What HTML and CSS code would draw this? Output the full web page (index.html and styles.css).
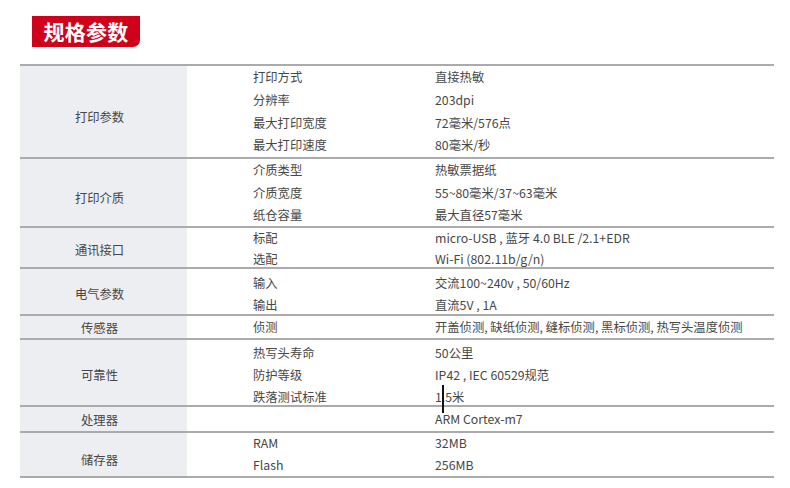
FILE: index.html
```html
<!DOCTYPE html>
<html lang="zh-CN">
<head>
<meta charset="utf-8">
<title>规格参数</title>
<link rel="stylesheet" href="styles.css">
</head>
<body>
<div class="page">
  <div class="title">规格参数</div>
  <div class="spec">
    <div class="group">
      <div class="cat cat-low">打印参数</div>
      <div class="rows lh-g1">
        <div class="row"><span class="k">打印方式</span><span class="v">直接热敏</span></div>
        <div class="row"><span class="k">分辨率</span><span class="v">203dpi</span></div>
        <div class="row"><span class="k">最大打印宽度</span><span class="v">72毫米/576点</span></div>
        <div class="row"><span class="k">最大打印速度</span><span class="v">80毫米/秒</span></div>
      </div>
    </div>
    <div class="group">
      <div class="cat cat-low">打印介质</div>
      <div class="rows lh-g2">
        <div class="row"><span class="k">介质类型</span><span class="v">热敏票据纸</span></div>
        <div class="row"><span class="k">介质宽度</span><span class="v">55~80毫米/37~63毫米</span></div>
        <div class="row"><span class="k">纸仓容量</span><span class="v">最大直径57毫米</span></div>
      </div>
    </div>
    <div class="group">
      <div class="cat">通讯接口</div>
      <div class="rows lh-g3">
        <div class="row"><span class="k">标配</span><span class="v">micro-USB , 蓝牙 4.0 BLE /2.1+EDR</span></div>
        <div class="row"><span class="k">选配</span><span class="v">Wi-Fi (802.11b/g/n)</span></div>
      </div>
    </div>
    <div class="group">
      <div class="cat">电气参数</div>
      <div class="rows lh-g4">
        <div class="row"><span class="k">输入</span><span class="v">交流100~240v , 50/60Hz</span></div>
        <div class="row"><span class="k">输出</span><span class="v">直流5V , 1A</span></div>
      </div>
    </div>
    <div class="group">
      <div class="cat cat-tight">传感器</div>
      <div class="rows lh-g5">
        <div class="row"><span class="k">侦测</span><span class="v">开盖侦测, 缺纸侦测, 缝标侦测, 黑标侦测, 热写头温度侦测</span></div>
      </div>
    </div>
    <div class="group">
      <div class="cat">可靠性</div>
      <div class="rows lh-g6">
        <div class="row"><span class="k">热写头寿命</span><span class="v">50公里</span></div>
        <div class="row"><span class="k">防护等级</span><span class="v">IP42 , IEC 60529规范</span></div>
        <div class="row"><span class="k">跌落测试标准</span><span class="v">1.5米</span></div>
      </div>
    </div>
    <div class="group">
      <div class="cat cat-tight">处理器</div>
      <div class="rows lh-g7">
        <div class="row"><span class="k"></span><span class="v">ARM Cortex-m7</span></div>
      </div>
    </div>
    <div class="group">
      <div class="cat cat-low">储存器</div>
      <div class="rows lh-g8">
        <div class="row"><span class="k">RAM</span><span class="v">32MB</span></div>
        <div class="row"><span class="k">Flash</span><span class="v">256MB</span></div>
      </div>
    </div>
  </div>
  <div class="caret"></div>
</div>
</body>
</html>
```
FILE: styles.css
```css
html, body {
  margin: 0;
  padding: 0;
  background: #ffffff;
}

body {
  font-family: "Noto Sans CJK SC", "Noto Sans", sans-serif;
  color: #474747;
  font-size: 12.3px;
}

.page {
  position: relative;
  padding: 16px 16px 0 20px;
}

.title {
  margin-left: 12px;
  width: 108px;
  height: 31px;
  background: #d0021b;
  color: #ffffff;
  font-weight: 700;
  font-size: 21px;
  line-height: 31px;
  text-align: center;
  border-radius: 0 0 7px 0;
  letter-spacing: 0.3px;
}

.spec {
  margin-top: 17px;
  width: 754px;
  border-top: 2px solid #ababab;
}

.group {
  display: flex;
  border-bottom: 2px solid #ababab;
}

.cat {
  box-sizing: border-box;
  width: 167px;
  flex: none;
  background: #edeef1;
  display: flex;
  align-items: center;
  justify-content: center;
  padding: 5px 8px 0 0;
}

.cat-tight {
  padding-top: 2px;
}

.cat-low {
  padding-top: 11px;
}

.rows {
  flex: 1;
  padding-left: 66px;
}

.row {
  display: flex;
}

.k {
  width: 182px;
  flex: none;
}

.v {
  flex: 1;
  white-space: nowrap;
}

.lh-g1 { line-height: 22.75px; }
.lh-g2 { line-height: 22.5px; height: 67px; }
.lh-g3 { line-height: 20.5px; height: 39px; }
.lh-g4 { line-height: 21.5px; padding-top: 4px; height: 41px; }
.lh-g5 { line-height: 22px; }
.lh-g6 { line-height: 22px; padding-top: 2px; height: 63px; }
.lh-g7 { line-height: 24px; }
.lh-g8 { line-height: 21.5px; }

.caret {
  position: absolute;
  left: 442px;
  top: 385px;
  width: 2px;
  height: 28px;
  background: #111111;
}
```
